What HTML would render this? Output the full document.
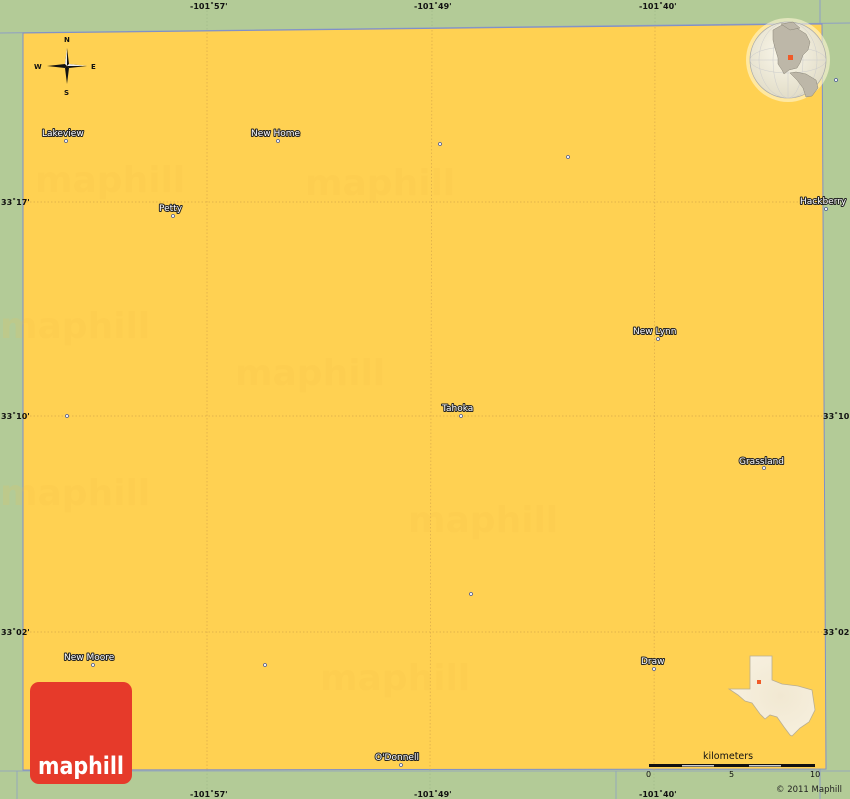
<!DOCTYPE html>
<html><head><meta charset="utf-8"><style>
html,body{margin:0;padding:0;background:#b3cb97;}
svg{display:block}
.lb{font-family:"DejaVu Sans","Liberation Sans",sans-serif;font-size:9px;fill:#fff;stroke:#222;stroke-width:2px;paint-order:stroke;stroke-linejoin:round}
.co{font-family:"DejaVu Sans","Liberation Sans",sans-serif;font-size:8px;fill:#111;font-weight:bold}
.dot{fill:#fff;stroke:#4a5a9a;stroke-width:0.8}
.g{stroke:#d9a94a;stroke-width:0.7;stroke-dasharray:1.5 2;fill:none}
.gg{stroke:#9fb888;stroke-width:0.7;stroke-dasharray:1.5 2;fill:none}
.wm{font-family:"DejaVu Sans",sans-serif;font-size:36px;font-weight:bold;fill:#f5c04a;opacity:0.15}
</style></head><body>
<svg width="850" height="799" viewBox="0 0 850 799" xmlns="http://www.w3.org/2000/svg">
<defs>
<radialGradient id="glb" cx="0.45" cy="0.4" r="0.6"><stop offset="0" stop-color="#fbf8ec"/><stop offset="1" stop-color="#e2ddc8"/></radialGradient>
<radialGradient id="tx" cx="0.6" cy="0.5" r="0.6"><stop offset="0" stop-color="#f1e8d2"/><stop offset="1" stop-color="#f7f0df"/></radialGradient>
</defs>
<rect width="850" height="799" fill="#b3cb97"/>
<line class="gg" x1="207" y1="0" x2="207" y2="33"/><line class="gg" x1="432" y1="0" x2="432" y2="30"/><line class="gg" x1="655" y1="0" x2="655" y2="27"/>
<line class="gg" x1="207" y1="770" x2="207" y2="799"/><line class="gg" x1="430" y1="770" x2="430" y2="799"/><line class="gg" x1="654" y1="770" x2="654" y2="799"/>
<line x1="0" y1="33" x2="850" y2="23" stroke="#8e9fc4" stroke-width="1"/>
<line x1="820" y1="0" x2="820" y2="799" stroke="#8e9fc4" stroke-width="1"/>
<line x1="0" y1="771" x2="850" y2="771" stroke="#8e9fc4" stroke-width="0.8"/>
<line x1="17" y1="771" x2="17" y2="799" stroke="#8e9fc4" stroke-width="0.8"/>
<line x1="616" y1="771" x2="616" y2="799" stroke="#8e9fc4" stroke-width="0.8"/>
<polygon points="23,33 822,24 826,769 23,770" fill="#ffd152" stroke="#7f8fc8" stroke-width="1"/>
<line class="g" x1="207" y1="33" x2="207" y2="770"/>
<line class="g" x1="432" y1="30" x2="430" y2="770"/>
<line class="g" x1="655" y1="27" x2="654" y2="770"/>
<line class="g" x1="23" y1="202" x2="826" y2="202"/>
<line class="g" x1="23" y1="416" x2="826" y2="416"/>
<line class="g" x1="23" y1="632" x2="826" y2="632"/>
<text class="wm" x="35" y="192">maphill</text><text class="wm" x="305" y="195">maphill</text>
<text class="wm" x="0" y="338">maphill</text><text class="wm" x="235" y="385">maphill</text>
<text class="wm" x="0" y="505">maphill</text><text class="wm" x="408" y="532">maphill</text>
<text class="wm" x="320" y="690">maphill</text>
<text class="co" x="190" y="9">-101˚57'</text><text class="co" x="414" y="9">-101˚49'</text><text class="co" x="639" y="9">-101˚40'</text>
<text class="co" x="190" y="797">-101˚57'</text><text class="co" x="414" y="797">-101˚49'</text><text class="co" x="639" y="797">-101˚40'</text>
<text class="co" x="1" y="205">33˚17'</text><text class="co" x="1" y="419">33˚10'</text><text class="co" x="1" y="635">33˚02'</text>
<text class="co" x="823" y="419">33˚10'</text><text class="co" x="823" y="635">33˚02'</text>
<g transform="translate(67,66)">
<polygon points="0,-18 2,-2 0,0 -2,-2" fill="#111"/><polygon points="0,18 2,2 0,0 -2,2" fill="#111"/>
<polygon points="-20,0 -2,-2 0,0 -2,2" fill="#111"/><polygon points="20,0 2,2 0,0 2,-2" fill="#111"/>
<polygon points="0,-18 -2,-2 0,0" fill="#eee"/><polygon points="20,0 2,-2 0,0" fill="#eee"/>
<text x="-3" y="-24" class="co" style="font-size:7px">N</text><text x="-3" y="29" class="co" style="font-size:7px">S</text>
<text x="-33" y="3" class="co" style="font-size:7px">W</text><text x="24" y="3" class="co" style="font-size:7px">E</text>
</g>
<text class="lb" x="42" y="136">Lakeview</text><circle class="dot" cx="66" cy="141" r="1.5"/>
<text class="lb" x="251" y="136">New Home</text><circle class="dot" cx="278" cy="141" r="1.5"/>
<circle class="dot" cx="440" cy="144" r="1.5"/><circle class="dot" cx="568" cy="157" r="1.5"/>
<text class="lb" x="159" y="211">Petty</text><circle class="dot" cx="173" cy="216" r="1.5"/>
<text class="lb" x="800" y="204">Hackberry</text><circle class="dot" cx="826" cy="209" r="1.5"/>
<text class="lb" x="633" y="334">New Lynn</text><circle class="dot" cx="658" cy="339" r="1.5"/>
<text class="lb" x="442" y="411">Tahoka</text><circle class="dot" cx="461" cy="416" r="1.5"/>
<circle class="dot" cx="67" cy="416" r="1.5"/>
<text class="lb" x="739" y="464">Grassland</text><circle class="dot" cx="764" cy="468" r="1.5"/>
<circle class="dot" cx="471" cy="594" r="1.5"/>
<text class="lb" x="64" y="660">New Moore</text><circle class="dot" cx="93" cy="665" r="1.5"/>
<circle class="dot" cx="265" cy="665" r="1.5"/>
<text class="lb" x="641" y="664">Draw</text><circle class="dot" cx="654" cy="669" r="1.5"/>
<text class="lb" x="375" y="760">O'Donnell</text><circle class="dot" cx="401" cy="765" r="1.5"/>
<circle class="dot" cx="836" cy="80" r="1.5"/>
<!-- globe -->
<circle cx="788" cy="60" r="42" fill="#fff6d6" opacity="0.6"/>
<circle cx="788" cy="60" r="38" fill="url(#glb)" stroke="#aaa" stroke-width="0.8"/>
<g stroke="#ccc" stroke-width="0.5" fill="none">
<ellipse cx="788" cy="60" rx="38" ry="13"/><ellipse cx="788" cy="60" rx="15" ry="38"/><ellipse cx="788" cy="60" rx="29" ry="38"/><line x1="750" y1="60" x2="826" y2="60"/><line x1="788" y1="22" x2="788" y2="98"/>
</g>
<path d="M773,30 L782,25 L795,27 L806,34 L810,42 L808,50 L803,55 L800,63 L797,68 L789,70 L784,74 L782,70 L778,64 L778,58 L775,48 L773,40 Z" fill="#bdb7a8" stroke="#8a8577" stroke-width="0.5"/>
<path d="M781,24 L793,22 L800,28 L790,30 Z" fill="#bdb7a8" stroke="#8a8577" stroke-width="0.5"/>
<path d="M790,73 L796,72 L806,74 L816,80 L818,88 L812,96 L806,97 L803,88 L797,80 Z" fill="#bdb7a8" stroke="#8a8577" stroke-width="0.5"/>
<rect x="788" y="55" width="5" height="5" fill="#f05a28"/>
<!-- texas -->
<path d="M750,656 L772,656 L772,680 L782,684 L798,686 L812,690 L815,710 L809,722 L800,728 L792,736 L790,735 L784,727 L777,717 L770,715 L765,719 L760,714 L752,703 L745,701 L738,695 L729,689 L750,689 Z" fill="url(#tx)" stroke="#b9ae92" stroke-width="0.8"/>
<rect x="757" y="680" width="4" height="4" fill="#f05a28"/>
<text x="703" y="759" style="font-family:'DejaVu Sans',sans-serif;font-size:9.5px;fill:#111">kilometers</text>
<rect x="649" y="764" width="166" height="3" fill="#111"/>
<rect x="682" y="765" width="32" height="1.5" fill="#ccc"/><rect x="749" y="765" width="32" height="1.5" fill="#ccc"/>
<text x="646" y="777" class="co" style="font-weight:normal">0</text><text x="729" y="777" class="co" style="font-weight:normal">5</text><text x="810" y="777" class="co" style="font-weight:normal">10</text>
<text x="776" y="792" style="font-family:'DejaVu Sans',sans-serif;font-size:8.5px;fill:#222">© 2011 Maphill</text>
<rect x="30" y="682" width="102" height="102" rx="9" fill="#e63a2a"/>
<text x="38" y="774" textLength="86" lengthAdjust="spacingAndGlyphs" style="font-family:'DejaVu Sans',sans-serif;font-size:24px;font-weight:bold;fill:#fff">maphill</text>
</svg>
</body></html>
